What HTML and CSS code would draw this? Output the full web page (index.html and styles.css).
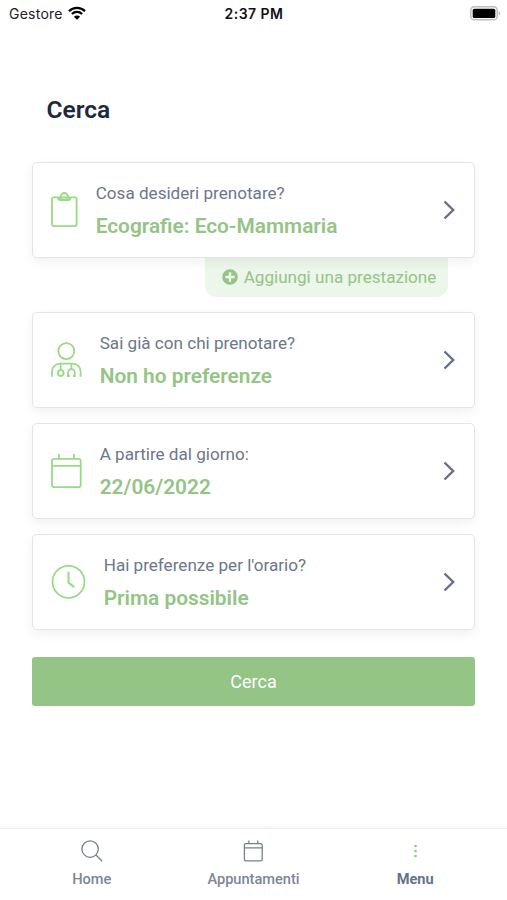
FILE: index.html
```html
<!DOCTYPE html>
<html lang="it">
	<head>
		<meta charset="UTF-8">
		<meta name="viewport" content="width=device-width, initial-scale=1">
		<title>Cerca</title>
		<link rel="stylesheet" href="styles.css">
	</head>
	<body>
		<div class="app">
			<header class="status">
				<div class="carrier">
					<span>Gestore</span>
					<svg class="wifi" viewBox="0 0 18 14">
						<path d="M1 5.1a11.4 11.4 0 0 1 16 0M3.9 8a7.3 7.3 0 0 1 10.2 0" fill="none" stroke="#000" stroke-width="2.3"/>
						<path d="M9 13.8L5.9 10.7a4.4 4.4 0 0 1 6.2 0z"/>
					</svg>
				</div>
				<span class="time">2:37 PM</span>
				<svg class="battery" viewBox="0 0 31 15">
					<rect x="0.8" y="0.8" width="26.4" height="13" rx="3.6" fill="#fff" stroke="#bdbdbd" stroke-width="1.5"/>
					<rect x="2.7" y="2.7" width="22.6" height="9.2" rx="1.5"/>
					<path d="M28.6 5.2c2.4.8 2.4 3.4 0 4.2z" fill="#bdbdbd"/>
				</svg>
			</header>

			<main class="content">
				<h1 class="title">Cerca</h1>

				<div class="card">
					<svg class="icon clipboard" viewBox="0 0 27 36">
						<rect x="1" y="5.4" width="24.6" height="28.8" rx="2"/>
						<path d="M7.4 5.8c0 1.2.8 2 2 2h7.8c1.2 0 2-.8 2-2" stroke-width="2.4"/>
						<path d="M9.8 6.4V4.5a3.5 3.5 0 0 1 7 0v1.9"/>
					</svg>
					<div class="text">
						<p class="label">Cosa desideri prenotare?</p>
						<p class="value">Ecografie: Eco-Mammaria</p>
					</div>
					<svg class="arrow" viewBox="0 0 12 20"><path d="M1.5 1.5L10.2 10L1.5 18.5"/></svg>
				</div>
				<div class="add">
					<svg class="plus" viewBox="0 0 18 18">
						<circle cx="9" cy="9" r="9"/>
						<path d="M9 4.3v9.4M4.3 9h9.4"/>
					</svg>
					<span>Aggiungi una prestazione</span>
				</div>

				<div class="card">
					<svg class="icon doctor" viewBox="0 0 31 36">
						<circle cx="15.3" cy="9.1" r="8"/>
						<path d="M1 34.7V29.6a8 8 0 0 1 8-8H21.6a8 8 0 0 1 8 8v5.1"/>
						<path d="M9.7 21.6v6.6M20.4 21.6v5.6"/>
						<circle cx="9.7" cy="31.1" r="2.9"/>
						<path d="M18.8 34H17v-3.4a3.4 3.4 0 0 1 6.8 0V34H22"/>
					</svg>
					<div class="text">
						<p class="label">Sai già con chi prenotare?</p>
						<p class="value">Non ho preferenze</p>
					</div>
					<svg class="arrow" viewBox="0 0 12 20"><path d="M1.5 1.5L10.2 10L1.5 18.5"/></svg>
				</div>

				<div class="card">
					<svg class="icon calendar" viewBox="0 0 31 36">
						<rect x="1" y="5.8" width="28.7" height="28.4" rx="2.2"/>
						<path d="M1 12.9h28.7M7.9 1v4.8M22.9 1v4.8"/>
					</svg>
					<div class="text">
						<p class="label">A partire dal giorno:</p>
						<p class="value">22/06/2022</p>
					</div>
					<svg class="arrow" viewBox="0 0 12 20"><path d="M1.5 1.5L10.2 10L1.5 18.5"/></svg>
				</div>

				<div class="card">
					<svg class="icon clock" viewBox="0 0 35 36">
						<circle cx="17.5" cy="17.8" r="16"/>
						<path d="M17.5 7.8v10.8l5.7 4.5" stroke-width="2.1"/>
					</svg>
					<div class="text">
						<p class="label">Hai preferenze per l'orario?</p>
						<p class="value">Prima possibile</p>
					</div>
					<svg class="arrow" viewBox="0 0 12 20"><path d="M1.5 1.5L10.2 10L1.5 18.5"/></svg>
				</div>

				<button class="search" type="button">Cerca</button>
			</main>

			<nav class="tabs">
				<div class="tab">
					<svg class="tab-icon" viewBox="0 0 22 22">
						<circle cx="9.1" cy="9.1" r="8.2"/>
						<path d="M15 15l6.2 6.2"/>
					</svg>
					<span>Home</span>
				</div>
				<div class="tab">
					<svg class="tab-icon" viewBox="0 0 22 22">
						<rect x="2.4" y="3.6" width="17.8" height="17.3" rx="1.6"/>
						<path d="M2.4 7.8h17.8M6.9.6v3M15.8.6v3"/>
					</svg>
					<span>Appuntamenti</span>
				</div>
				<div class="tab active">
					<svg class="tab-icon dots" viewBox="0 0 22 22">
						<circle cx="11.5" cy="6" r="1.3"/>
						<circle cx="11.5" cy="11" r="1.3"/>
						<circle cx="11.5" cy="16" r="1.3"/>
					</svg>
					<span>Menu</span>
				</div>
			</nav>
		</div>
	</body>
</html>
```
FILE: styles.css
```css
*{
	margin: 0;
	padding: 0;
	box-sizing: border-box;
}
body{
	background: white;
	font-family: Roboto, "Liberation Sans", sans-serif;
	color: #6b778a;
}
svg{
	display: block;
	flex-shrink: 0;
}
.app{
	height: 900px;
	display: flex;
	flex-direction: column;
}

/* status bar */
.status{
	height: 27px;
	padding: 0 6px 0 9px;
	display: grid;
	grid-template-columns: 1fr auto 1fr;
	align-items: center;
	font-family: Inter, sans-serif;
	font-size: 14px;
	color: #222;
}
.carrier{
	display: flex;
	align-items: center;
	gap: 5px;
	letter-spacing: 0.25px;
}
.wifi{
	width: 18px;
	height: 14px;
	margin-top: -2px;
}
.time{
	padding-right: 2px;
	font-weight: 600;
	letter-spacing: 0.45px;
	color: #111;
}
.battery{
	width: 31px;
	height: 15px;
	justify-self: end;
}

/* search form */
.content{
	flex: 1;
	padding: 67px 32px 0;
}
.title{
	padding-left: 14.5px;
	margin-bottom: 37px;
	font-size: 24.5px;
	line-height: 31px;
	font-weight: 600;
	color: #1e293b;
}
.card{
	position: relative;
	height: 96px;
	margin-bottom: 15px;
	padding: 0 19px 1px 18px;
	display: flex;
	align-items: center;
	border: 1px solid #e2e4e7;
	border-radius: 5px;
	background: white;
	box-shadow: 0 4px 12px rgba(0,0,0,0.06);
}
.icon{
	height: 36px;
	margin-right: 17.7px;
	fill: none;
	stroke: #98db86;
	stroke-width: 1.8;
}
.clipboard{
	width: 27px;
}
.doctor, .calendar{
	width: 31px;
}
.clock{
	width: 35px;
}
.text{
	flex: 1;
	padding-top: 2px;
}
.label{
	font-size: 17.1px;
	line-height: 26px;
}
.value{
	margin-top: 5px;
	font-size: 20.85px;
	line-height: 30px;
	font-weight: 600;
	color: #94c486;
}
.arrow{
	width: 12px;
	height: 20px;
	fill: none;
	stroke: #64708a;
	stroke-width: 2.4;
}
.add{
	width: 243px;
	height: 39px;
	margin: -15px 27px 15px auto;
	padding: 0 0 2px 4px;
	display: flex;
	align-items: center;
	justify-content: center;
	gap: 5px;
	border-radius: 0 0 12px 12px;
	background: #edf6ea;
	font-size: 17.1px;
	color: #94c486;
}
.plus{
	width: 18px;
	height: 18px;
	fill: #94c486;
	stroke: #edf6ea;
	stroke-width: 2.4;
}
.search{
	display: block;
	width: 100%;
	height: 49px;
	margin-top: 27px;
	border: 0;
	border-radius: 3px;
	background: #94c486;
	font-family: inherit;
	font-size: 18px;
	color: white;
}

/* bottom bar */
.tabs{
	height: 72px;
	padding: 0 11px;
	display: grid;
	grid-template-columns: repeat(3, 1fr);
	border-top: 1px solid #ececec;
	box-shadow: 0 -1px 2px rgba(0,0,0,0.04);
}
.tab{
	padding-top: 11px;
	display: flex;
	flex-direction: column;
	align-items: center;
	gap: 8px;
	font-size: 14.6px;
	line-height: 18px;
	font-weight: 500;
	color: #7b8796;
}
.tab-icon{
	width: 22px;
	height: 22px;
	fill: none;
	stroke: #75808f;
	stroke-width: 1.3;
}
.dots{
	fill: #94c486;
	stroke: none;
}
.active{
	font-weight: 700;
	color: #64748b;
}
```
